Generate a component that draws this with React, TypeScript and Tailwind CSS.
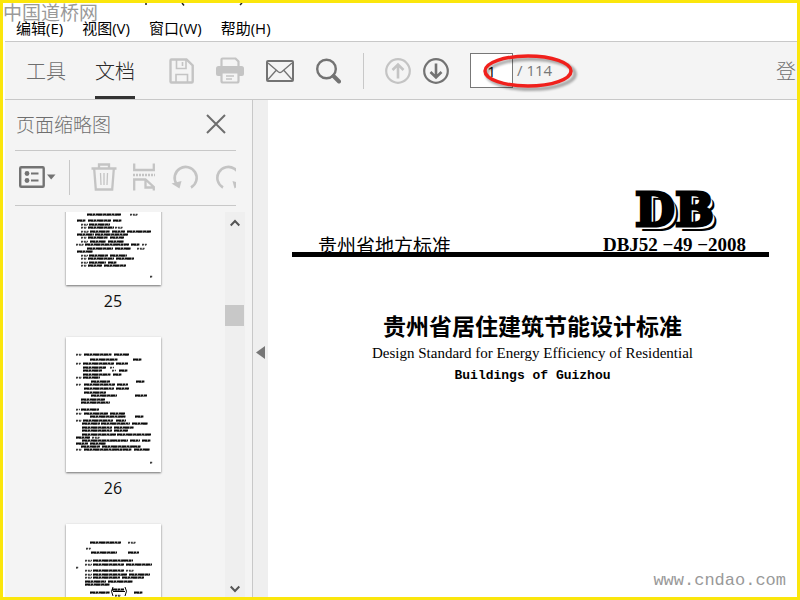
import { useState } from 'react';

type Row = number[];

// every row of a thumbnail: y, then start / end pairs of the word runs
const page25: Row[] = [
  [64, 21, 55, 64, 72],
  [70, 11, 20, 22, 45, 47, 56],
  [74, 15, 22, 23, 44],
  [77, 15, 21, 22, 48, 49, 57],
  [81, 15, 23, 24, 44, 46, 59, 61, 85],
  [84, 11, 28, 29, 62],
  [87, 15, 21, 22, 42, 44, 58],
  [91, 15, 22, 24, 40, 42, 58],
  [94, 10, 18, 19, 63, 65, 74, 76, 81],
  [98, 21, 47, 49, 65, 71, 79],
  [101, 11, 27],
  [105, 15, 22, 23, 42, 44, 61],
  [108, 15, 21, 22, 48, 50, 68],
  [112, 15, 22, 23, 40, 42, 51],
  [115, 15, 21, 22, 36, 38, 60],
  [126, 84, 87],
];

const page26: Row[] = [
  [17, 10, 16, 18, 46, 48, 63],
  [22, 24, 52, 67, 76],
  [26, 10, 15, 17, 48, 50, 62],
  [30, 17, 40, 44, 48],
  [33, 17, 36, 46, 50, 53, 62],
  [37, 17, 45, 47, 56],
  [40, 10, 16, 17, 34],
  [44, 25, 44, 70, 79],
  [47, 10, 15, 18, 49, 51, 62],
  [51, 18, 48, 50, 63],
  [55, 18, 40],
  [58, 25, 51, 69, 81],
  [62, 15, 39],
  [65, 15, 44],
  [72, 10, 14, 15, 33],
  [76, 10, 16, 18, 42, 44, 59],
  [79, 24, 60, 69, 78],
  [83, 10, 16, 17, 47, 50, 60],
  [86, 16, 34, 35, 64, 66, 82],
  [90, 16, 46, 48, 68],
  [93, 16, 46, 48, 62],
  [97, 16, 50, 51, 85],
  [100, 10, 24, 26, 34],
  [103, 16, 62, 64, 74, 76, 85],
  [106, 10, 22, 24, 40],
  [109, 15, 34, 36, 75],
  [112, 10, 16, 18, 66, 68, 84],
  [125, 84, 87],
];

const page27: Row[] = [
  [18, 24, 55, 62, 70],
  [24, 20, 25],
  [28, 25, 51, 62, 73],
  [36, 19, 26, 27, 67],
  [40, 19, 26, 27, 58, 60, 86],
  [43, 10, 13],
  [46, 19, 26, 27, 58, 60, 68],
  [50, 19, 26, 27, 61, 63, 84],
  [53, 19, 26, 27, 54, 56, 78],
  [57, 19, 40, 42, 67],
  [60, 19, 44],
  [65, 46, 58],
  [68, 24, 44, 68, 77],
  [71, 49, 55],
];

const thumbnails = [
  { page: 25, rows: page25 },
  { page: 26, rows: page26 },
  { page: 27, rows: page27 },
];

function PagePreview({ rows, fraction }: { rows: Row[]; fraction: boolean }) {
  return (
    <svg className="h-[135px] w-[95px] bg-white shadow-[0_1px_2px_rgba(0,0,0,0.55)]" viewBox="0 0 95 135" aria-hidden="true">
      {rows.map((row) => {
        const [y, ...points] = row;
        const runs = [];
        for (let i = 0; i < points.length; i += 2) {
          const thin = points[i + 1] - points[i] < 9;
          runs.push(
            <g key={i} stroke="#000">
              <path d={`M${points[i]} ${y + 0.5}H${points[i + 1]}`} strokeWidth={thin ? 1.4 : 2} strokeDasharray={thin ? '2 .8' : '5 .5 2.5 .6 7 .5 3 .4'} opacity={thin ? 0.75 : 0.95} />
              <path d={`M${points[i]} ${y + 1.4}H${points[i + 1] - 1}`} strokeWidth="1" strokeDasharray="1.5 1.5 4 .8" opacity="0.45" />
            </g>
          );
        }
        return <g key={y}>{runs}</g>;
      })}
      {fraction && <path d="M47 63q-3 4 0 9M59 63q3 4 0 9M47 67.5H59" fill="none" stroke="#000" />}
    </svg>
  );
}

function SaveIcon() {
  return (
    <svg className="h-[26px] w-[25px]" viewBox="0 0 25 26" fill="none" stroke="#c4c4c4" strokeWidth="2.4">
      <path d="M1.5 2.5q0-1 1-1H17.500L23.700 7.5V23.5q0 1-1 1H2.5q-1 0-1-1Z" />
      <path d="M7.5 2V10.5H17V2M13.5 4V8M7 24V16.5H18.5V24" strokeWidth="1.6" />
    </svg>
  );
}

function PrintIcon() {
  return (
    <svg className="h-[27px] w-7" viewBox="0 0 28 27" fill="none" stroke="#c4c4c4">
      <path d="M5.5 10V2.5q0-1 1-1H19.500L22.5 4.500V10" strokeWidth="2.2" />
      <path d="M2.500 9H25.500q2.500 0 2.500 2.500v5.500q0 2-2 2H2q-2 0-2-2v-5.500q0-2.500 2.500-2.500Z" fill="#c4c4c4" stroke="none" />
      <path d="M5.5 15.5H22.5V24q0 1.5-1.5 1.5H7q-1.5 0-1.5-1.5Z" fill="#f4f4f4" strokeWidth="2.2" />
      <path d="M10 19H18M10 22H16" strokeWidth="1.3" />
    </svg>
  );
}

function MailIcon() {
  return (
    <svg className="h-[22px] w-7" viewBox="0 0 28 22" fill="none" stroke="#737373">
      <rect x="1" y="1" width="26" height="20" rx="1" strokeWidth="2" />
      <path d="M2 3L12.5 12Q14 13 15.5 12L26 3M2 19.5L10 10.5M26 19.5L18 10.5" strokeWidth="1.3" />
    </svg>
  );
}

function SearchIcon() {
  return (
    <svg className="h-[26px] w-[25px]" viewBox="0 0 25 26" fill="none" stroke="#737373">
      <circle cx="10.5" cy="11" r="9.3" strokeWidth="2.4" />
      <path d="M17.500 18L23 23.500" strokeWidth="4" strokeLinecap="round" />
    </svg>
  );
}

function ArrowCircle({ down, color }: { down?: boolean; color: string }) {
  return (
    <svg className="size-[26px]" viewBox="0 0 26 26" fill="none" stroke={color} strokeWidth="2.2">
      <circle cx="13" cy="13" r="11.8" />
      {down ? (
        <path d="M13 5.5V19M7.5 14L13 19.5L18.5 14" strokeWidth="2.6" />
      ) : (
        <path d="M13 20.5V7M7.5 12L13 6.5L18.5 12" strokeWidth="2.6" />
      )}
    </svg>
  );
}

function ListIcon() {
  return (
    <svg className="h-[22px] w-[37px]" viewBox="0 0 37 22" fill="none" stroke="#737373">
      <rect x="1.2" y="1.2" width="23.5" height="19.6" rx="1" strokeWidth="2.4" />
      <circle cx="8" cy="7.5" r="2.4" fill="#737373" stroke="none" />
      <circle cx="8" cy="14.5" r="2.4" fill="#737373" stroke="none" />
      <path d="M12 7.5H19.5M12 14.5H19.5" strokeWidth="2" />
      <path d="M28 8.500H36.5L32.2 13.5Z" fill="#737373" stroke="none" />
    </svg>
  );
}

function TrashIcon() {
  return (
    <svg className="h-7 w-[26px]" viewBox="0 0 26 28" fill="none" stroke="#c4c4c4" strokeWidth="2.3">
      <path d="M0.5 5.5H25.5M8 5V1.5H18V5M3.2 6L4.8 26.5H21.2L22.8 6" />
      <path d="M9.5 10L10 22M13 10V22M16.5 10L16 22" strokeWidth="1.3" />
    </svg>
  );
}

function SplitIcon() {
  return (
    <svg className="h-7 w-[22px]" viewBox="0 0 22 28" fill="none" stroke="#c4c4c4" strokeWidth="2.3">
      <path d="M1.2 0.5V7H20.8V0.5M1.2 27.5V16.5H12.5L20.8 24V27.5M12.5 16.5V24.5H20.8" />
      <path d="M0 12H22" strokeDasharray="2 1" />
    </svg>
  );
}

function RotateIcon({ flip }: { flip?: boolean }) {
  return (
    <svg className="h-[26px] w-7" viewBox="0 0 28 26" fill="none" stroke="#c4c4c4">
      <g transform={flip ? 'translate(28 0) scale(-1 1)' : undefined}>
        <path d="M5.5 20A11 11 0 1 1 20 23.5" strokeWidth="2.6" />
        <path d="M0.5 19.5L10.500 17L8.5 24.500Z" fill="#c4c4c4" stroke="none" />
      </g>
    </svg>
  );
}

function MenuBar() {
  const menus = ['编辑(E)', '视图(V)', '窗口(W)', '帮助(H)'];
  return (
    <header className="relative h-[39px] shrink-0 border-b border-[#c8c8c8] bg-white">
      {/* bottom edge of the title bar */}
      <svg className="absolute left-[140px] top-0 h-[3px] w-[110px]" viewBox="0 0 110 3" aria-hidden="true">
        <path d="M1 0V2M37 0L39 2.5M95 2L97 0" stroke="#222" strokeWidth="1.5" fill="none" />
      </svg>
      <nav className="flex gap-[19px] pl-[11px] pt-[13px]">
        {menus.map((menu) => (
          <button key={menu} type="button" className="text-[15px] leading-6 text-black">
            {menu}
          </button>
        ))}
      </nav>
      <p className="absolute -left-0.5 -top-0.5 text-[19px] leading-6 text-[#9a9a9a]">中国道桥网</p>
    </header>
  );
}

function Toolbar() {
  const [page, setPage] = useState('1');

  return (
    <div className="flex h-[58px] shrink-0 items-center overflow-hidden border-b border-[#c8c8c8] bg-[#f4f4f4] pl-[21px]">
      <div className="flex h-full shrink-0 gap-[29px] text-[20px] font-light">
        <button type="button" className="border-b-[3px] border-transparent pt-1.5 text-[#6e6e6e]">工具</button>
        <button type="button" className="border-b-[3px] border-[#333] pt-1.5 text-[#2b2b2b]">文档</button>
      </div>
      <div className="ml-[34px] flex shrink-0 items-center gap-[22px]">
        <button type="button" aria-label="保存"><SaveIcon /></button>
        <button type="button" aria-label="打印"><PrintIcon /></button>
        <button type="button" aria-label="电子邮件"><MailIcon /></button>
        <button type="button" aria-label="查找"><SearchIcon /></button>
      </div>
      <div className="ml-[22px] flex shrink-0 items-center gap-[21px]">
        <div className="h-9 w-px bg-[#c8c8c8]"></div>
        <div className="flex gap-3">
          <button type="button" aria-label="上一页"><ArrowCircle color="#c4c4c4" /></button>
          <button type="button" aria-label="下一页"><ArrowCircle down color="#737373" /></button>
        </div>
        <div className="relative flex items-center gap-1">
          <input
            aria-label="页码"
            className="h-[35px] w-[43px] border border-[#777] bg-white text-center text-[15px] text-black outline-none"
            value={page}
            onChange={(e) => setPage(e.target.value)}
          />
          <span className="text-[15px] text-[#777]">/ 114</span>
          {/* red marker round the page count */}
          <svg className="pointer-events-none absolute left-2.5 top-0 h-10 w-[102px]" viewBox="0 0 102 40" fill="none" aria-hidden="true">
            <ellipse cx="51" cy="21" rx="44" ry="15" stroke="#000" strokeOpacity="0.3" strokeWidth="4" className="blur-[1px]" />
            <ellipse cx="48" cy="18" rx="43" ry="15" stroke="#f0201c" strokeWidth="3.5" />
          </svg>
        </div>
      </div>
      <button type="button" className="ml-auto mr-px shrink-0 pt-0.5 text-[20px] font-light text-[#6e6e6e]">登</button>
    </div>
  );
}

function Sidebar() {
  return (
    <aside className="flex w-[248px] shrink-0 flex-col border-r border-[#c8c8c8] bg-[#f4f4f4]">
      <div className="ml-2.5 mr-4 flex h-[51px] shrink-0 items-center justify-between border-b border-[#c8c8c8]">
        <h2 className="pl-px text-[19px] font-light leading-6 text-[#6e6e6e]">页面缩略图</h2>
        <button type="button" aria-label="关闭" className="mr-2.5 pb-0.5">
          <svg className="size-5" viewBox="0 0 20 20" stroke="#6e6e6e" strokeWidth="2">
            <path d="M1 1L19 19M19 1L1 19" />
          </svg>
        </button>
      </div>
      <div className="ml-2.5 mr-4 flex h-[55px] shrink-0 items-center overflow-hidden border-b border-[#c8c8c8] pb-0.5 pl-1">
        <button type="button" aria-label="选项" className="shrink-0"><ListIcon /></button>
        <div className="ml-[13px] mr-[21px] h-[35px] w-px shrink-0 bg-[#c8c8c8]"></div>
        <div className="flex shrink-0 items-center gap-4">
          <button type="button" aria-label="删除"><TrashIcon /></button>
          <button type="button" aria-label="拆分"><SplitIcon /></button>
          <button type="button" aria-label="逆时针旋转"><RotateIcon /></button>
          <button type="button" aria-label="顺时针旋转"><RotateIcon flip /></button>
        </div>
      </div>
      <div className="mt-1.5 flex min-h-0 flex-1">
        <div className="min-w-0 flex-1 overflow-hidden">
          <ul className="-mt-[62px] flex flex-col items-center gap-5 pr-1">
            {thumbnails.map(({ page, rows }) => (
              <li key={page} className="flex flex-col items-center">
                <PagePreview rows={rows} fraction={page === 27} />
                <span className="text-[16px] leading-8 text-[#111]">{page}</span>
              </li>
            ))}
          </ul>
        </div>
        <div className="mr-[7px] flex w-5 flex-col items-center bg-[#efefef]">
          <button type="button" aria-label="向上滚动" className="py-[7px]">
            <svg className="h-2 w-2.5" viewBox="0 0 10 8" fill="none" stroke="#555" strokeWidth="2">
              <path d="M0.7 6.5L5 2L9.3 6.5" />
            </svg>
          </button>
          <div className="flex w-full flex-1 flex-col">
            <div className="grow-[7]"></div>
            <div className="mr-px h-[21px] bg-[#c8c8c8]"></div>
            <div className="grow-[25]"></div>
          </div>
          <button type="button" aria-label="向下滚动" className="py-1">
            <svg className="h-2 w-2.5" viewBox="0 0 10 8" fill="none" stroke="#555" strokeWidth="2">
              <path d="M0.7 1.5L5 6L9.3 1.5" />
            </svg>
          </button>
        </div>
      </div>
    </aside>
  );
}

function DocumentPage() {
  return (
    <main className="relative min-w-0 flex-1 overflow-hidden bg-white pt-[84px]">
      <div className="ml-6 mr-7">
        <div className="flex items-end justify-between pl-[26px] pr-[23px]">
          <p className="-mb-1.5 text-[19px] leading-6 text-black">贵州省地方标准</p>
          <div className="-mb-0.5 flex flex-col items-center font-['Liberation_Serif',serif] font-bold text-black">
            <p className="font-['DejaVu_Serif',serif] text-[46px] leading-[52px] [-webkit-text-stroke:3px_#000] [text-shadow:3px_3px_0_#fff,5px_5px_0_#000]">DB</p>
            <p className="text-[19px] leading-[18px]">DBJ52 −49 −2008</p>
          </div>
        </div>
        <hr className="relative border-t-[5px] border-black" />
      </div>
      <div className="mt-14 flex flex-col items-center text-black">
        <h1 className="text-[23px] font-bold leading-[26px]">贵州省居住建筑节能设计标准</h1>
        <p className="font-['Liberation_Serif',serif] text-[15px] leading-7">Design Standard for Energy Efficiency of Residential</p>
        <p className="font-['Liberation_Mono',monospace] text-[13px] font-bold leading-[18px]">Buildings of Guizhou</p>
      </div>
      <p className="absolute bottom-1 right-[11px] font-['Liberation_Mono',monospace] text-[17px] text-[#999]">www.cndao.com</p>
    </main>
  );
}

export default function App() {
  return (
    <div className="flex h-screen flex-col overflow-hidden border-[3px] border-[#fbe60c] bg-white pl-0.5 font-['Open_Sans','Noto_Sans_CJK_SC',sans-serif]">
      <MenuBar />
      <Toolbar />
      <div className="flex min-h-0 flex-1">
        <Sidebar />
        <button type="button" aria-label="折叠面板" className="flex w-[15px] shrink-0 items-center justify-center bg-[#efefef]">
          <svg className="mt-2 h-[13px] w-[9px]" viewBox="0 0 9 13" fill="#777">
            <path d="M9 0V13L0 6.500Z" />
          </svg>
        </button>
        <DocumentPage />
      </div>
    </div>
  );
}
